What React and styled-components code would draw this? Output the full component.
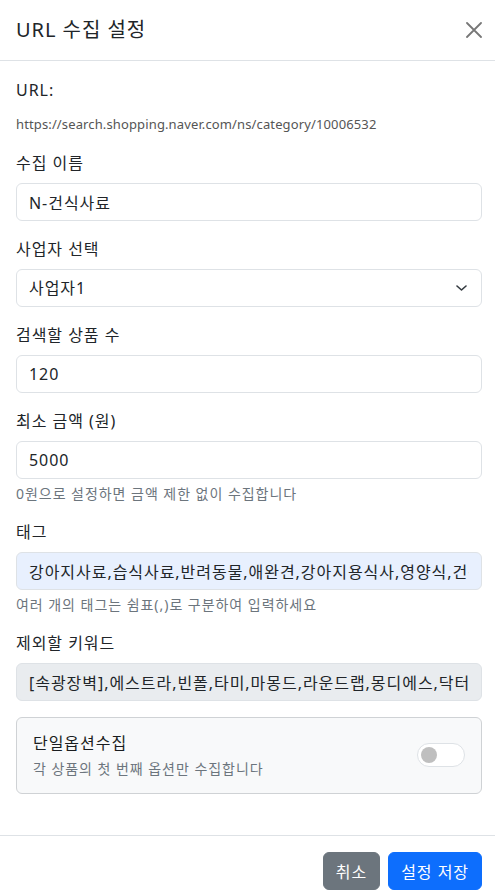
import { useState } from "react";
import styled, { createGlobalStyle } from "styled-components";

const GlobalStyle = createGlobalStyle`
  * { box-sizing: border-box; }
  html, body {
    margin: 0;
    padding: 0;
    background: #ffffff;
    overflow-x: hidden;
  }
  body {
    font-family: "Noto Sans", "Noto Sans CJK KR", sans-serif;
    color: #212529;
    letter-spacing: 0.06em;
  }
`;

const Modal = styled.div`
  width: 498px;
  background: #fff;
  border-top-left-radius: 8px;
  border-top-right-radius: 8px;
`;

const Header = styled.div`
  display: flex;
  align-items: center;
  justify-content: space-between;
  height: 61px;
  padding: 0 16px;
  border-bottom: 1px solid #dee2e6;
`;

const Title = styled.h5`
  margin: 0;
  font-size: 20px;
  font-weight: 400;
  line-height: 30px;
  font-family: inherit;
`;

const CloseButton = styled.button`
  border: none;
  background: none;
  padding: 0;
  width: 16px;
  height: 16px;
  display: flex;
  cursor: pointer;
`;

const Body = styled.div`
  padding: 17px 16px 41px;
`;

const Field = styled.div`
  margin-bottom: ${(p) => p.$gap || "16px"};
`;

const Label = styled.label`
  display: block;
  font-size: 16px;
  line-height: 24px;
  margin-bottom: 8px;
`;

const UrlText = styled.div`
  font-size: 13px;
  line-height: 20px;
  color: #555;
  margin-top: 12px;
  letter-spacing: 0.01em;
`;

const Input = styled.input`
  display: block;
  width: 100%;
  height: 38px;
  padding: 0 12px;
  font-size: 16px;
  font-family: inherit;
  letter-spacing: inherit;
  color: #212529;
  background: ${(p) => p.$bg || "#fff"};
  border: 1px solid #dee2e6;
  border-radius: 6px;
  outline: none;
`;

const SelectWrap = styled.div`
  position: relative;
`;

const Select = styled.select`
  display: block;
  width: 100%;
  height: 38px;
  padding: 0 36px 0 12px;
  font-size: 16px;
  font-family: inherit;
  letter-spacing: inherit;
  color: #212529;
  background: #fff;
  border: 1px solid #dee2e6;
  border-radius: 6px;
  appearance: none;
  outline: none;
`;

const Chevron = styled.svg`
  position: absolute;
  right: 15px;
  top: 16px;
  pointer-events: none;
`;

const Help = styled.div`
  margin-top: 4px;
  font-size: 14px;
  line-height: 21px;
  color: #6c757d;
`;

const OptionCard = styled.div`
  display: flex;
  align-items: center;
  justify-content: space-between;
  padding: 13px 16px 14px;
  background: #f8f9fa;
  border: 1px solid #cfd2d5;
  border-radius: 6px;
`;

const OptionTitle = styled.div`
  font-size: 16px;
  font-weight: 400;
  line-height: 24px;
  color: #1a1d20;
`;

const OptionSub = styled.div`
  font-size: 14px;
  line-height: 21px;
  color: #6c757d;
  margin-top: 3px;
`;

const Switch = styled.button`
  position: relative;
  width: 48px;
  height: 24px;
  border: 1px solid #dee2e6;
  border-radius: 12px;
  background: ${(p) => (p.$on ? "#0d6efd" : "#fff")};
  padding: 0;
  cursor: pointer;

  &::after {
    content: "";
    position: absolute;
    top: 3px;
    left: ${(p) => (p.$on ? "27px" : "3px")};
    width: 16px;
    height: 16px;
    border-radius: 50%;
    background: ${(p) => (p.$on ? "#fff" : "#bfbfbf")};
  }
`;

const Footer = styled.div`
  display: flex;
  justify-content: flex-end;
  gap: 8px;
  padding: 16px;
  border-top: 1px solid #dee2e6;
`;

const Button = styled.button`
  height: 38px;
  padding: 0 12px;
  font-size: 16px;
  font-family: inherit;
  letter-spacing: inherit;
  color: #fff;
  border: 1px solid ${(p) => (p.$primary ? "#0d6efd" : "#6c757d")};
  background: ${(p) => (p.$primary ? "#0d6efd" : "#6c757d")};
  border-radius: 6px;
  cursor: pointer;
`;

export default function App() {
  const [name, setName] = useState("N-건식사료");
  const [count, setCount] = useState("120");
  const [price, setPrice] = useState("5000");
  const [tags, setTags] = useState(
    "강아지사료,습식사료,반려동물,애완견,강아지용식사,영양식,건강사료"
  );
  const [single, setSingle] = useState(false);

  return (
    <>
      <GlobalStyle />
      <Modal>
        <Header>
          <Title>URL 수집 설정</Title>
          <CloseButton aria-label="닫기">
            <svg width="16" height="16" viewBox="0 0 16 16">
              <path
                d="M1 1L15 15M15 1L1 15"
                stroke="#777"
                strokeWidth="1.8"
                strokeLinecap="round"
              />
            </svg>
          </CloseButton>
        </Header>
        <Body>
          <Field $gap="17px">
            <Label>URL:</Label>
            <UrlText>https://search.shopping.naver.com/ns/category/10006532</UrlText>
          </Field>
          <Field>
            <Label>수집 이름</Label>
            <Input value={name} onChange={(e) => setName(e.target.value)} />
          </Field>
          <Field>
            <Label>사업자 선택</Label>
            <SelectWrap>
              <Select defaultValue="1">
                <option value="1">사업자1</option>
                <option value="2">사업자2</option>
              </Select>
              <Chevron width="11" height="6" viewBox="0 0 11 6">
                <path
                  d="M1 1L5.5 5L10 1"
                  fill="none"
                  stroke="#343a40"
                  strokeWidth="1.6"
                  strokeLinecap="round"
                  strokeLinejoin="round"
                />
              </Chevron>
            </SelectWrap>
          </Field>
          <Field>
            <Label>검색할 상품 수</Label>
            <Input value={count} onChange={(e) => setCount(e.target.value)} />
          </Field>
          <Field>
            <Label>최소 금액 (원)</Label>
            <Input value={price} onChange={(e) => setPrice(e.target.value)} />
            <Help>0원으로 설정하면 금액 제한 없이 수집합니다</Help>
          </Field>
          <Field>
            <Label>태그</Label>
            <Input
              $bg="#e8f0fe"
              value={tags}
              onChange={(e) => setTags(e.target.value)}
            />
            <Help>여러 개의 태그는 쉼표(,)로 구분하여 입력하세요</Help>
          </Field>
          <Field>
            <Label>제외할 키워드</Label>
            <Input
              $bg="#e9ecef"
              readOnly
              value="[속광장벽],에스트라,빈폴,타미,마몽드,라운드랩,몽디에스,닥터지"
            />
          </Field>
          <OptionCard>
            <div>
              <OptionTitle>단일옵션수집</OptionTitle>
              <OptionSub>각 상품의 첫 번째 옵션만 수집합니다</OptionSub>
            </div>
            <Switch $on={single} onClick={() => setSingle(!single)} />
          </OptionCard>
        </Body>
        <Footer>
          <Button>취소</Button>
          <Button $primary>설정 저장</Button>
        </Footer>
      </Modal>
    </>
  );
}
